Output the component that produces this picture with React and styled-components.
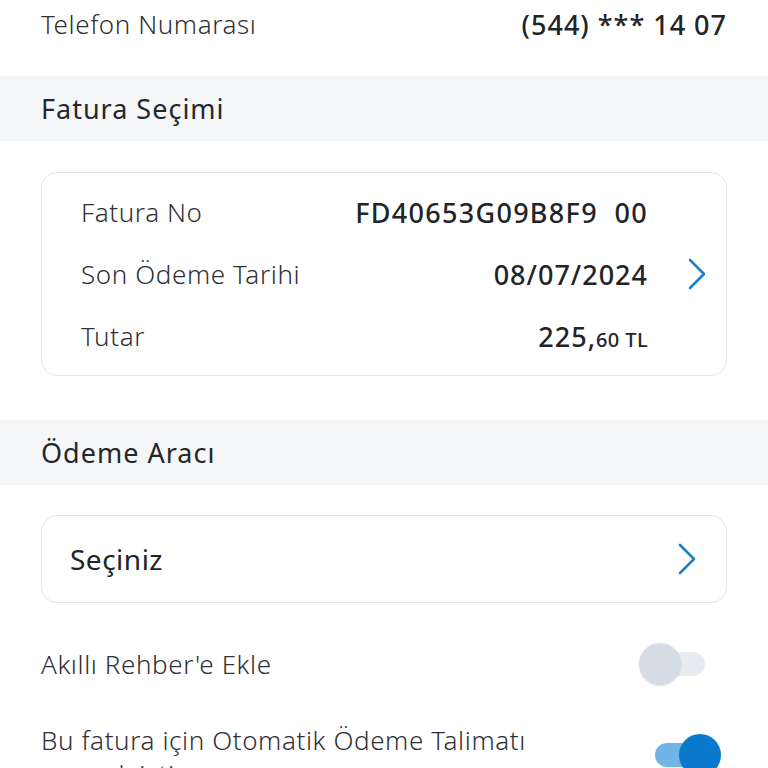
import styled, { createGlobalStyle } from "styled-components"

const GlobalStyle = createGlobalStyle`
    body {
        margin: 0;
        background: #ffffff;
        font-family: "Noto Sans", "Open Sans", sans-serif;
        color: #2b2d31;
    }
`
const Page = styled.div`
    width: 768px;
    height: 768px;
    overflow: hidden;
`
const InfoRow = styled.div`
    display: flex;
    align-items: center;
    justify-content: space-between;
    height: 48px;
    padding: 0 41px;
`
const Label = styled.span`
    font-size: 26px;
    font-weight: 300;
    color: #2f3136;
    letter-spacing: 0.6px;
`
const Value = styled.span`
    font-size: 27px;
    font-weight: 500;
    color: #222428;
    letter-spacing: ${(p) => p.ls || 1}px;
`
const Small = styled.span`
    font-size: 20px;
    font-weight: 500;
    letter-spacing: 0.4px;
`
const SectionHead = styled.div`
    margin-top: ${(p) => p.top}px;
    height: 65px;
    background: #f5f6f8;
    display: flex;
    align-items: center;
    padding: 0 41px;
    font-size: 27px;
    font-weight: 400;
    color: #25272b;
    letter-spacing: 1px;
`
const Card = styled.div`
    margin: ${(p) => p.top}px 41px 0;
    border: 1.5px solid #dfe5ed;
    border-radius: 16px;
    display: flex;
    align-items: center;
    padding: ${(p) => p.pad};
    height: ${(p) => p.h}px;
    box-sizing: border-box;
`
const Rows = styled.div`
    flex: 1;
    display: flex;
    flex-direction: column;
`
const CardRow = styled.div`
    display: flex;
    justify-content: space-between;
    align-items: center;
    height: 62px;
`
const Chevron = styled.svg`
    width: 22px;
    height: 34px;
    flex: none;
    margin-left: ${(p) => p.gap}px;
`
const SelectText = styled.span`
    flex: 1;
    font-size: 28px;
    font-weight: 400;
    color: #222428;
    letter-spacing: 0.5px;
`
const ToggleRow = styled.div`
    display: flex;
    justify-content: space-between;
    align-items: ${(p) => (p.multi ? "flex-start" : "center")};
    padding: 0 41px;
    margin-top: ${(p) => p.top}px;
    height: ${(p) => p.h}px;
`
const ToggleText = styled.span`
    font-size: 26px;
    font-weight: 300;
    color: #2f3136;
    line-height: 34px;
    letter-spacing: 0.6px;
    max-width: 500px;
`
const Track = styled.div`
    position: relative;
    width: 50px;
    height: 24px;
    border-radius: 12px;
    margin-right: 22px;
    margin-top: ${(p) => p.mt || 0}px;
    background: ${(p) => (p.on ? "#72b4e6" : "#e8ecf2")};
    flex: none;
`
const Knob = styled.div`
    position: absolute;
    top: -9px;
    left: ${(p) => (p.on ? "24px" : "-16px")};
    width: 42px;
    height: 42px;
    border-radius: 50%;
    background: ${(p) => (p.on ? "#0b79cb" : "#d6dce6")};
    box-shadow: 0 1px 2px rgba(0, 0, 0, 0.12);
`

const Arrow = ({ gap }) => (
    <Chevron gap={gap} viewBox="0 0 22 34">
        <path d="M4 3 L18 17 L4 31" fill="none" stroke="#1f80c6" strokeWidth="2.6" strokeLinecap="round" strokeLinejoin="round" />
    </Chevron>
)

const App = () => {
    return (
        <Page>
            <GlobalStyle />
            <InfoRow>
                <Label>Telefon Numarası</Label>
                <Value>(544) *** 14 07</Value>
            </InfoRow>
            <SectionHead top={28}>Fatura Seçimi</SectionHead>
            <Card top={31} h={204} pad="0 18px 0 39px">
                <Rows>
                    <CardRow>
                        <Label>Fatura No</Label>
                        <Value ls={1.3}>FD40653G09B8F9&nbsp;&nbsp;00</Value>
                    </CardRow>
                    <CardRow>
                        <Label>Son Ödeme Tarihi</Label>
                        <Value>08/07/2024</Value>
                    </CardRow>
                    <CardRow>
                        <Label>Tutar</Label>
                        <Value>225,<Small>60 TL</Small></Value>
                    </CardRow>
                </Rows>
                <Arrow gap={38} />
            </Card>
            <SectionHead top={44}>Ödeme Aracı</SectionHead>
            <Card top={30} h={88} pad="0 28px 0 28px">
                <SelectText>Seçiniz</SelectText>
                <Arrow gap={0} />
            </Card>
            <ToggleRow top={28} h={66}>
                <ToggleText>Akıllı Rehber'e Ekle</ToggleText>
                <Track>
                    <Knob />
                </Track>
            </ToggleRow>
            <ToggleRow top={26} h={80} multi>
                <ToggleText>Bu fatura için Otomatik Ödeme Talimatı vermek istiyorum</ToggleText>
                <Track on mt={20}>
                    <Knob on />
                </Track>
            </ToggleRow>
        </Page>
    )
}

export default App
